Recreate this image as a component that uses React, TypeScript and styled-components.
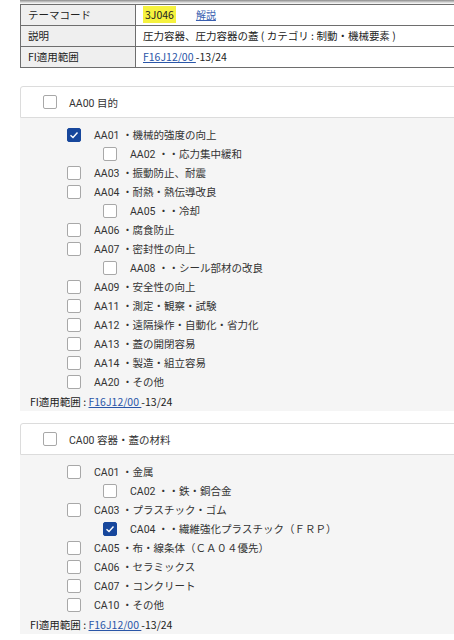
import React from "react";
import styled, { createGlobalStyle } from "styled-components";

const Global = createGlobalStyle`
  html, body { margin: 0; padding: 0; background: #fff; overflow: hidden; }
  body { font-family: "Roboto", "Noto Sans CJK JP", sans-serif; color: #333; }
`;

const Page = styled.div`
  width: 454px;
  height: 640px;
  overflow: hidden;
  padding-left: 20px;
  box-sizing: border-box;
`;

const Inner = styled.div`
  width: 450px;
`;

const TopShade = styled.div`
  height: 4px;
  background: linear-gradient(#8a8a8a, #d8d8d8 60%, #fff);
`;

const InfoTable = styled.table`
  width: 100%;
  border-collapse: collapse;
  font-family: "Noto Sans CJK JP", sans-serif;
  font-size: 10.5px;
  color: #222;
`;

const Th = styled.td`
  width: 107px;
  height: 20px;
  padding: 0 0 0 7px;
  background: #efefef;
  border: 1px solid #6e6e6e;
  line-height: 20px;
  font-weight: normal;
`;

const Td = styled.td`
  height: 20px;
  padding: 0 0 0 7px;
  border: 1px solid #6e6e6e;
  line-height: 20px;
  white-space: nowrap;
`;

const Code = styled.span`
  background: #f6f23e;
  padding: 1px 2px;
`;

const SmallLink = styled.a`
  margin-left: 20px;
  color: #3a5fb0;
  font-size: 10px;
  text-decoration: underline;
`;

const Link = styled.a`
  color: #2a56a8;
  text-decoration: underline;
`;

const Section = styled.section<{ $top: number }>`
  margin-top: ${(p) => p.$top}px;
`;

const SectionHead = styled.div`
  height: 30px;
  border: 1px solid #dcdcdc;
  border-radius: 3px 0 0 0;
  background: #fff;
  display: flex;
  align-items: center;
  padding-left: 22px;
  gap: 12px;
  font-size: 10.5px;
`;

const SectionBody = styled.div`
  background: #f5f5f5;
  padding: 7px 0 0 0;
`;

const Row = styled.div<{ $level: number }>`
  height: 19px;
  display: flex;
  align-items: center;
  gap: 13px;
  padding-left: ${(p) => (p.$level === 2 ? 83 : 47)}px;
  font-size: 10.5px;
  white-space: nowrap;
`;

const Box = styled.span<{ $checked?: boolean }>`
  width: 14px;
  height: 14px;
  flex: none;
  box-sizing: border-box;
  border: 1px solid ${(p) => (p.$checked ? "#17479c" : "#a8a8a8")};
  border-radius: 2px;
  background: ${(p) => (p.$checked ? "#17479c" : "#fff")};
  display: flex;
  align-items: center;
  justify-content: center;
`;

const FiLine = styled.div`
  height: 18px;
  padding: 2px 0 0 10px;
  line-height: 18px;
  font-size: 10.5px;
  font-family: "Noto Sans CJK JP", sans-serif;
  color: #222;
`;

const Check = ({ checked }: { checked?: boolean }) => (
  <Box $checked={checked}>
    {checked && (
      <svg width="10" height="10" viewBox="0 0 10 10">
        <polyline points="1.5,5.2 4,7.5 8.5,2.5" fill="none" stroke="#fff" strokeWidth="1.4" />
      </svg>
    )}
  </Box>
);

type Item = { code: string; label: string; level: number; checked?: boolean };

const aaItems: Item[] = [
  { code: "AA01", label: "・機械的強度の向上", level: 1, checked: true },
  { code: "AA02", label: "・・応力集中緩和", level: 2 },
  { code: "AA03", label: "・振動防止、耐震", level: 1 },
  { code: "AA04", label: "・耐熱・熱伝導改良", level: 1 },
  { code: "AA05", label: "・・冷却", level: 2 },
  { code: "AA06", label: "・腐食防止", level: 1 },
  { code: "AA07", label: "・密封性の向上", level: 1 },
  { code: "AA08", label: "・・シール部材の改良", level: 2 },
  { code: "AA09", label: "・安全性の向上", level: 1 },
  { code: "AA11", label: "・測定・観察・試験", level: 1 },
  { code: "AA12", label: "・遠隔操作・自動化・省力化", level: 1 },
  { code: "AA13", label: "・蓋の開閉容易", level: 1 },
  { code: "AA14", label: "・製造・組立容易", level: 1 },
  { code: "AA20", label: "・その他", level: 1 },
];

const caItems: Item[] = [
  { code: "CA01", label: "・金属", level: 1 },
  { code: "CA02", label: "・・鉄・銅合金", level: 2 },
  { code: "CA03", label: "・プラスチック・ゴム", level: 1 },
  { code: "CA04", label: "・・繊維強化プラスチック（ＦＲＰ）", level: 2, checked: true },
  { code: "CA05", label: "・布・線条体（ＣＡ０４優先）", level: 1 },
  { code: "CA06", label: "・セラミックス", level: 1 },
  { code: "CA07", label: "・コンクリート", level: 1 },
  { code: "CA10", label: "・その他", level: 1 },
];

const Group = ({ top, title, items }: { top: number; title: string; items: Item[] }) => (
  <Section $top={top}>
    <SectionHead>
      <Check />
      <span>{title}</span>
    </SectionHead>
    <SectionBody>
      {items.map((it) => (
        <Row key={it.code} $level={it.level}>
          <Check checked={it.checked} />
          <span>
            {it.code} {it.label}
          </span>
        </Row>
      ))}
      <FiLine>
        FI適用範囲 : <Link href="#">F16J12/00 </Link>-13/24
      </FiLine>
    </SectionBody>
  </Section>
);

export default function App() {
  return (
    <Page>
      <Global />
      <Inner>
        <TopShade />
        <InfoTable>
          <tbody>
            <tr>
              <Th>テーマコード</Th>
              <Td>
                <Code>3J046</Code>
                <SmallLink href="#">解説</SmallLink>
              </Td>
            </tr>
            <tr>
              <Th>説明</Th>
              <Td>圧力容器、圧力容器の蓋 ( カテゴリ : 制動・機械要素 )</Td>
            </tr>
            <tr>
              <Th>FI適用範囲</Th>
              <Td>
                <Link href="#">F16J12/00 </Link>-13/24
              </Td>
            </tr>
          </tbody>
        </InfoTable>
        <Group top={18} title="AA00 目的" items={aaItems} />
        <Group top={12} title="CA00 容器・蓋の材料" items={caItems} />
      </Inner>
    </Page>
  );
}
